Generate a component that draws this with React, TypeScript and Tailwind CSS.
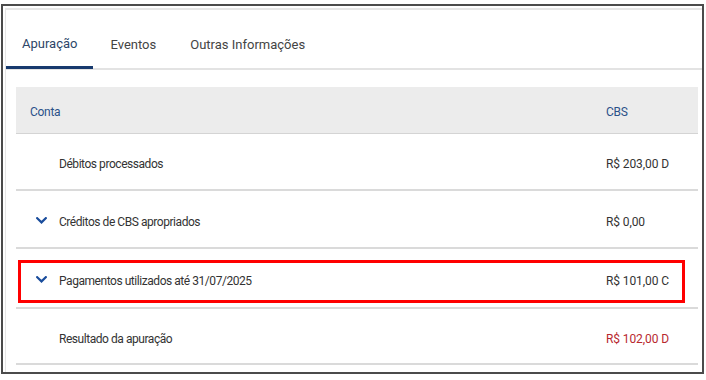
import React from "react";

const Chevron = () => (
  <svg width="11" height="7" viewBox="0 0 11 7" className="block">
    <path d="M1.2 1.2 L5.5 5.4 L9.8 1.2" fill="none" stroke="#1a4d9c" strokeWidth="2.2" strokeLinecap="square" />
  </svg>
);

type Row = { label: string; value: string; h: string; chevron?: boolean; red?: boolean; boxed?: boolean };

const rows: Row[] = [
  { label: "Débitos processados", value: "R$ 203,00 D", h: "h-[57px]" },
  { label: "Créditos de CBS apropriados", value: "R$ 0,00", h: "h-[58px]", chevron: true },
  { label: "Pagamentos utilizados até 31/07/2025", value: "R$ 101,00 C", h: "h-[60px]", chevron: true, boxed: true },
  { label: "Resultado da apuração", value: "R$ 102,00 D", h: "h-[56px]", red: true },
];

export default function App() {
  return (
    <div className="w-[706px] h-[380px] bg-white pt-[4px] pl-[1px]" style={{ fontFamily: "Roboto, 'Liberation Sans', sans-serif" }}>
      <div className="w-[703px] h-[370px] border-2 border-[#4b4b4b] pt-[2px] pl-[2px] overflow-hidden">
        <div className="h-full border-t-2 border-l border-[#e6e6e6]">
          <div className="flex border-b-2 border-[#e3e3e3]">
            <div className="h-[59px] -mb-[1px] border-b-[3px] border-[#173a6e] flex items-center pt-[11px] px-[16px] text-[13px] text-[#2d4668]">
              Apuração
            </div>
            <div className="h-[58px] flex items-center pt-[11px] px-[17px] text-[13px] text-[#444]">Eventos</div>
            <div className="h-[58px] flex items-center pt-[11px] px-[17px] text-[13px] text-[#444]">Outras Informações</div>
          </div>
          <div className="ml-[10px] mt-[17px] w-[682px]">
            <div className="h-[47px] bg-[#ececec] border-b border-[#d4d4d4] flex items-center pt-[3px] text-[12px] text-[#2b5189]">
              <div className="w-[590px] pl-[14px] tracking-[-0.3px]">Conta</div>
              <div className="tracking-[-0.3px]">CBS</div>
            </div>
            {rows.map((r) => (
              <div key={r.label} className={`relative ${r.h} border-b-2 border-[#dadada] flex items-center pt-[5px] text-[12px] text-[#333]`}>
                <div className="w-[590px] flex items-center">
                  <div className="w-[43px] flex justify-end pr-[12px] -mt-[3px]">{r.chevron ? <Chevron /> : null}</div>
                  <div className="tracking-[-0.45px]">{r.label}</div>
                </div>
                <div className={`tracking-[-0.1px] ${r.red ? "text-[#b8282e]" : ""}`}>{r.value}</div>
                {r.boxed ? (
                  <div className="absolute left-[2px] top-[11px] w-[667px] h-[43px] border-[3px] border-[#ff0000]" />
                ) : null}
              </div>
            ))}
          </div>
        </div>
      </div>
    </div>
  );
}
